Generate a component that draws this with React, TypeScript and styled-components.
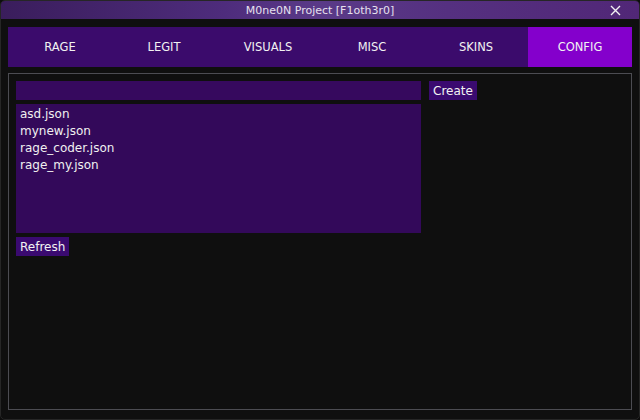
import * as React from 'react';
import styled, { createGlobalStyle } from 'styled-components';

const GlobalStyle = createGlobalStyle`
  html, body {
    margin: 0;
    padding: 0;
    background: #0d0d0d;
  }
  body {
    font-family: "DejaVu Sans", "Noto Sans", sans-serif;
  }
`;

const tabs = ['RAGE', 'LEGIT', 'VISUALS', 'MISC', 'SKINS', 'CONFIG'];
const configs = ['asd.json', 'mynew.json', 'rage_coder.json', 'rage_my.json'];

export default () => {
  const [active, setActive] = React.useState('CONFIG');
  return (
    <Window>
      <GlobalStyle />
      <TitleBar>
        <Title>M0ne0N Project [F1oth3r0]</Title>
        <Close>
          <svg width="11" height="11" viewBox="0 0 11 11">
            <path d="M1 1 L10 10 M10 1 L1 10" stroke="#f2f2f2" strokeWidth="1.4" />
          </svg>
        </Close>
      </TitleBar>
      <Body>
        <TabBar>
          {tabs.map((t) => (
            <Tab key={t} active={t === active} onClick={() => setActive(t)}>
              {t}
            </Tab>
          ))}
        </TabBar>
        <Panel>
          <LeftCol>
            <Input />
            <ListBox>
              {configs.map((c) => (
                <ListItem key={c}>{c}</ListItem>
              ))}
            </ListBox>
            <Row>
              <Button>Refresh</Button>
            </Row>
          </LeftCol>
          <RightCol>
            <Button>Create</Button>
          </RightCol>
        </Panel>
      </Body>
    </Window>
  );
};

const Window = styled.div`
  width: 640px;
  height: 420px;
  box-sizing: border-box;
  background: #0f0f0f;
  border: 1px solid #262626;
  border-radius: 5px;
  overflow: hidden;
  display: flex;
  flex-direction: column;
`;

const TitleBar = styled.div`
  height: 18px;
  position: relative;
  display: flex;
  align-items: center;
  justify-content: center;
  background: linear-gradient(90deg, #3a1d5c 0%, #4e2c7c 35%, #5a3a88 50%, #553080 70%, #512777 100%);
`;

const Title = styled.div`
  color: #e6e0ee;
  font-size: 11px;
`;

const Close = styled.div`
  position: absolute;
  right: 18px;
  top: 4px;
  display: flex;
`;

const Body = styled.div`
  flex: 1;
  display: flex;
  flex-direction: column;
  padding: 8px 7px 9px 7px;
  gap: 6px;
`;

const TabBar = styled.div`
  height: 40px;
  display: grid;
  grid-template-columns: repeat(6, 1fr);
  background: #3b0b6c;
`;

const Tab = styled.div<{ active?: boolean }>`
  display: flex;
  align-items: center;
  justify-content: center;
  color: #f2f2f2;
  font-size: 11.5px;
  background: ${(p) => (p.active ? '#8400cc' : 'transparent')};
  cursor: pointer;
`;

const Panel = styled.div`
  flex: 1;
  border: 1px solid #4c4c52;
  padding: 7px 7px;
  display: flex;
  gap: 8px;
`;

const LeftCol = styled.div`
  width: 405px;
  display: flex;
  flex-direction: column;
`;

const RightCol = styled.div`
  display: flex;
  flex-direction: column;
`;

const Input = styled.div`
  height: 19px;
  background: #36095e;
`;

const ListBox = styled.div`
  margin-top: 4px;
  height: 129px;
  background: #33095a;
  padding: 2px 4px;
  box-sizing: border-box;
`;

const ListItem = styled.div`
  color: #f0f0f0;
  font-size: 12px;
  line-height: 17px;
`;

const Row = styled.div`
  margin-top: 4px;
  display: flex;
`;

const Button = styled.div`
  height: 19px;
  padding: 0 4px;
  background: #3a0a70;
  color: #f2f2f2;
  font-size: 12px;
  display: flex;
  align-items: center;
`;
